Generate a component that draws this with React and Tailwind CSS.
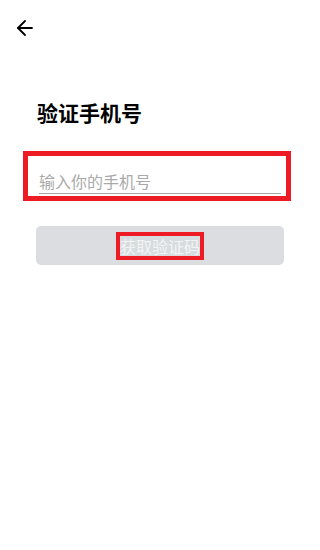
import React from 'react';
import { ArrowLeft } from 'lucide-react';

const font = { fontFamily: '"Noto Sans CJK SC", "Noto Sans", sans-serif' };

export default function App() {
  return (
    <div className="w-[320px] h-[550px] bg-white overflow-hidden" style={font}>
      <div className="pt-4 pl-[13px] h-10">
        <ArrowLeft size={24} strokeWidth={1.8} className="text-black" />
      </div>

      <h1 className="mt-[58px] ml-[37px] text-[21px] leading-[28px] font-bold text-black">
        验证手机号
      </h1>

      <div className="mt-[25px] ml-[23px] w-[268px] border-[5px] border-[#ed1c24]">
        <div className="pl-[11px] pr-[5px] pt-[13px] pb-[2px]">
          <input
            type="tel"
            placeholder="输入你的手机号"
            className="w-full h-[25px] text-[16px] leading-[24px] border-b border-[#a4a9aa] outline-none bg-transparent placeholder:text-[#aaaaaa]"
            style={font}
          />
        </div>
      </div>

      <button
        type="button"
        className="mt-[25px] ml-[36px] w-[248px] h-[39px] rounded-[5px] bg-[#dcdde0] flex items-center justify-center"
      >
        <span className="border-4 border-[#ed1c24] bg-[#d6dcdf] text-[16px] leading-[20px] text-[#f4f4f4]">
          获取验证码
        </span>
      </button>
    </div>
  );
}
